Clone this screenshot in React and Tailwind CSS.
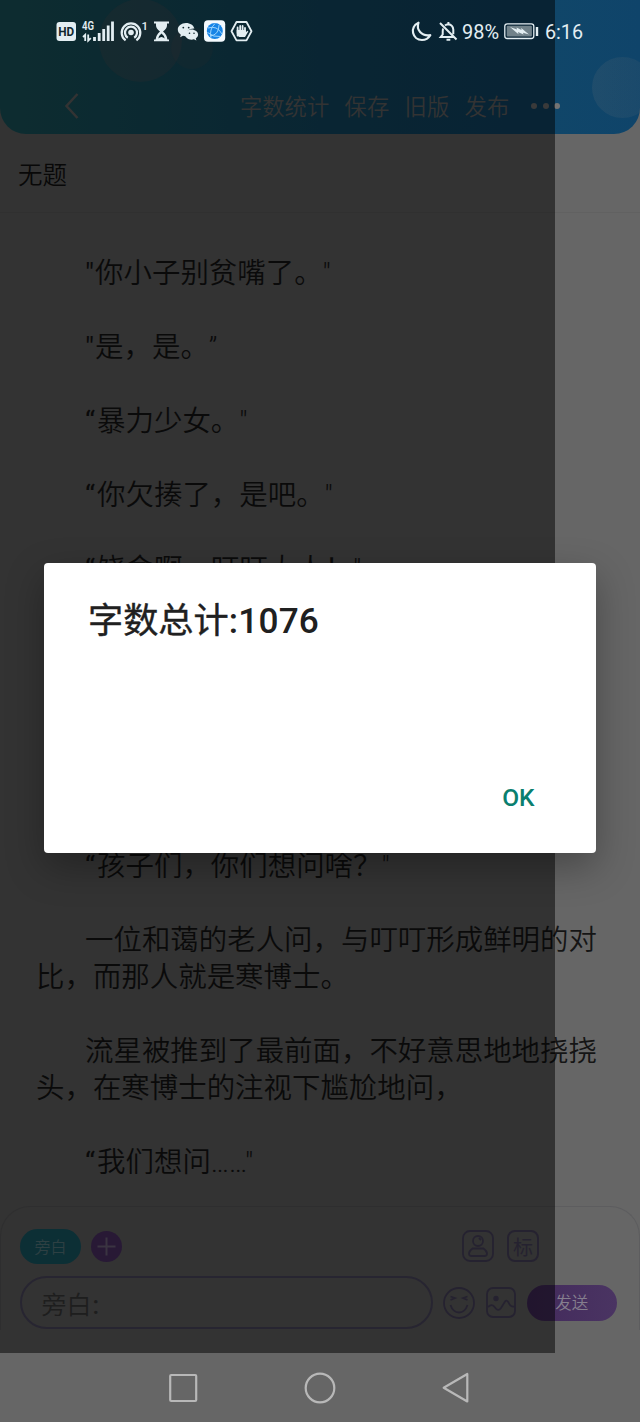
import React from "react";

const paragraphs = [
  '"你小子别贫嘴了。"',
  '"是，是。”',
  '“暴力少女。"',
  '“你欠揍了，是吧。"',
  '“饶命啊，叮叮大人！"',
  "",
  "",
  "",
  '“孩子们，你们想问啥？"',
  "一位和蔼的老人问，与叮叮形成鲜明的对比，而那人就是寒博士。",
  "流星被推到了最前面，不好意思地地挠挠头，在寒博士的注视下尴尬地问，",
  '“我们想问……"',
];

function StatusBar() {
  return (
    <div className="absolute inset-x-0 top-0 flex h-[62px] items-center text-[#e3eef2]">
      <svg width="640" height="62" viewBox="0 0 640 62" fill="none" stroke="currentColor">
        <rect x="56.5" y="22" width="19.5" height="19" rx="3" fill="currentColor" stroke="none" />
        <text x="58.300" y="36.300" fontSize="13" fontWeight="700" fontFamily="Roboto, sans-serif" fill="#10272e" stroke="none" textLength="16" lengthAdjust="spacingAndGlyphs">HD</text>
        <text x="82" y="30.300" fontSize="12" fontWeight="600" fontFamily="Roboto, sans-serif" fill="currentColor" stroke="none" textLength="12" lengthAdjust="spacingAndGlyphs">4G</text>
        <path d="M83 37l2.2-2.200v6.200M88.200 34.500v6.200l2.600-2.600" strokeWidth="1.8" />
        <path d="M94.500 37v4M99.200 33v8M103.700 29v12M108.200 25.500v15.500M112.500 21.500v19.500" strokeWidth="2.800" />
        <circle cx="131" cy="32.500" r="2.800" fill="currentColor" stroke="none" />
        <path d="M127.800 37.700a6 6 0 1 1 6.400 0M125.600 40.300a9.300 9.300 0 1 1 10.800 0" strokeWidth="2.200" />
        <text x="141.500" y="29.500" fontSize="11.500" fontWeight="500" fontFamily="Roboto, sans-serif" fill="currentColor" stroke="none">1</text>
        <path d="M154 22.500h15M154 40.300h15" strokeWidth="1.800" />
        <path d="M156 23h11v2.500q0 3-4 6q4 3 4.500 8.500h-12q.5-5.500 4.500-8.500q-4-3-4-6z" fill="currentColor" stroke="none" />
        <path d="M158.300 38.500q0-2.500 3.200-5q3.200 2.500 3.200 5q-3.200-3.200-6.400 0z" fill="#10272e" stroke="none" />
        <path d="M186 23c-4.600 0-8.200 3-8.200 6.600c0 2.100 1.200 3.900 3 5.100l-.7 2.500l2.900-1.400q1.500.5 3.400.4c-.9-5 3.400-7.900 8-7.600c-.8-3.400-4.200-5.600-8.400-5.600z" fill="currentColor" stroke="none" />
        <path d="M191.500 29.500c-3.600 0-6.500 2.300-6.500 5.100s2.900 5.100 6.500 5.100q1.300 0 2.400-.4l2.500 1.200l-.6-2c1.400-1 2.300-2.300 2.300-3.900c0-2.800-3-5.100-6.600-5.100z" fill="currentColor" stroke="none" />
        <g fill="#10272e" stroke="none">
          <circle cx="183.300" cy="27.600" r=".9" /><circle cx="188.700" cy="27.600" r=".9" />
          <circle cx="189.500" cy="33.300" r=".8" /><circle cx="194" cy="33.300" r=".8" />
        </g>
        <rect x="204" y="20.200" width="21.200" height="21.600" rx="4" fill="#f4fafe" stroke="none" />
        <circle cx="214.800" cy="31" r="8" fill="#1684e6" stroke="none" />
        <path d="M208 28q9-3 14 6M211 37.500q-2-8 4-14M210 36q9-1 9-11M207.500 32.500q6 5 13 4" stroke="#a9dcff" strokeWidth=".9" />
        <path d="M236.500 22h10l5 9.200l-5 9.200h-10l-5-9.200z" strokeWidth="1.800" strokeLinejoin="round" />
        <path d="M237.600 35.500v-8M240.200 33v-7M242.600 33v-7M245 34v-6" strokeWidth="1.800" strokeLinecap="round" />
        <path d="M236.700 30h9.200v2l1.900-1.300q.8.200.2 1.300l-3 5h-6q-2.300-2-2.300-4z" fill="currentColor" stroke="none" />
        <path d="M418.500 22.700c-9.500 4.300-6 17.300 3.500 17.300c3.500 0 6.500-1.800 8.300-4.800c-9 1.300-14.300-5.400-11.800-12.500z" strokeWidth="2.200" strokeLinejoin="round" />
        <path d="M443 28.500c-.3 1.500-.3 6-.3 6l-2 2.500h12.500M445 25.500q1.300-1.300 3.300-1.300q4.600.5 5 5.500v4.500M448.400 24v-2M446.500 39.800h3.800M440 23l16.500 16.500" strokeWidth="2" />
        <rect x="504.800" y="23.800" width="29" height="14.700" rx="2.500" strokeWidth="1.300" />
        <rect x="506.700" y="25.700" width="25.200" height="10.900" rx="1" fill="#71828a" stroke="none" />
        <path d="M510 27l7 2.500l-.5-2l5 2.500l-.3-2l7.800 6.500l-6-1.800l.5 1.800l-5.500-2.500l.5 2.200z" fill="currentColor" stroke="none" />
        <path d="M537 27v9" strokeWidth="2.400" />
        <text x="462" y="38.600" fontSize="20" fontFamily="Roboto, sans-serif" fill="currentColor" stroke="none" textLength="37" lengthAdjust="spacingAndGlyphs">98%</text>
        <text x="545" y="38.600" fontSize="20" fontFamily="Roboto, sans-serif" fill="currentColor" stroke="none" textLength="38" lengthAdjust="spacingAndGlyphs">6:16</text>
      </svg>
    </div>
  );
}

function Header() {
  return (
    <header className="relative h-[134px] shrink-0 overflow-hidden rounded-b-[26px] bg-linear-to-r from-[#1b5960] via-[#134b66] to-[#0f446a] pt-[78px]">
      <span className="absolute -top-px left-[99px] size-[83px] rounded-full bg-[#755]/20" />
      <span className="absolute top-[27px] left-[171px] size-[42px] rounded-full bg-[#755]/12" />
      <span className="absolute top-[57px] left-[592px] size-[61px] rounded-full bg-linear-to-r from-[#777]/15 to-[#777]/10" />
      <div className="relative flex h-14 items-center pl-[64px] text-[#666]">
        <svg width="16" height="28" viewBox="0 0 16 28" fill="none" stroke="currentColor" strokeWidth="2.500">
          <path d="M13.500 2L2.500 14L13.500 26" />
        </svg>
        <nav className="mt-[2px] ml-[160px] flex gap-[15.4px] text-[22.3px] leading-none font-[350] whitespace-nowrap">
          <span>字数统计</span>
          <span>保存</span>
          <span>旧版</span>
          <span>发布</span>
        </nav>
        <span className="ml-[22px] flex gap-[5.500px]">
          <i className="size-[6px] rounded-full bg-[#747474]" />
          <i className="size-[6px] rounded-full bg-[#747474]" />
          <i className="size-[6px] rounded-full bg-[#747474]" />
        </span>
      </div>
    </header>
  );
}

function Paragraph({ text }) {
  const quoted = /^["“]/.test(text);
  return (
    <p className="mb-[37.050px] min-h-[37.050px] w-[572px] indent-[49px] font-[350] break-all">
      {quoted && <span className={text[0] === "“" ? "font-normal tracking-[2px]" : "font-normal tracking-[1px]"}>{text[0]}</span>}
      {quoted ? text.slice(1) : text}
    </p>
  );
}

function Composer() {
  return (
    <footer className="relative h-[147px] shrink-0 pt-[22px]">
      <span className="absolute inset-x-0 top-0 h-[124px] rounded-t-[30px] border border-b-0 border-[#5d5d5f]" />
      <div className="relative flex h-[36px] items-center pl-[20px]">
        <span className="flex h-[35px] w-[61px] items-center justify-center rounded-full bg-[#195e6b] pt-[4px] text-[16px] leading-none font-[350] text-[#5c8086]">旁白</span>
        <span className="ml-[10px] flex size-[31px] items-center justify-center rounded-full bg-[#50336b]">
          <svg width="19" height="19" viewBox="0 0 19 19" stroke="#756982" strokeWidth="2"><path d="M9.500 .5v18M.5 9.500h18" /></svg>
        </span>
        <svg className="ml-[340px]" width="32" height="32" viewBox="0 0 32 32" fill="none" stroke="#4b4460" strokeWidth="1.800">
          <rect x="1" y="1" width="30" height="30" rx="7" />
          <circle cx="16" cy="11" r="5" />
          <path d="M17 8l2 2" />
          <path d="M10.500 18.500h11q3.500 2.500 3.500 5q0 2.500-2.500 2.500h-13Q7 26 7 23.500q0-2.500 3.500-5z" />
        </svg>
        <span className="ml-[13px] flex size-[32px] items-center justify-center rounded-[8px] border-2 border-[#4b4460] pt-[3px] text-[20px] leading-none text-[#4b4460]">标</span>
      </div>
      <div className="relative mt-[12px] flex h-[53px] items-center pl-[19.500px]">
        <span className="flex h-[53px] w-[413px] items-center rounded-full border-2 border-[#4f4a62] pt-[5px] pl-[20px] text-[25px] leading-none font-[350] text-[#3c3c3c]">旁白<span className="pl-[1px] font-medium">:</span></span>
        <svg className="ml-[10px]" width="32" height="32" viewBox="0 0 32 32" fill="none" stroke="#4b4460" strokeWidth="1.800">
          <circle cx="16" cy="16" r="15" />
          <path d="M7.500 18q2.500 7.500 8.500 7.500t8.500-7.500M7.500 9.500l4.500 1.500l-4.500 2M24.500 9.500l-4.500 1.500l4.500 2" />
        </svg>
        <svg className="ml-[11.500px]" width="30" height="31" viewBox="0 0 30 31" fill="none" stroke="#4b4460" strokeWidth="1.800">
          <rect x="1" y="1" width="28" height="29" rx="6" />
          <circle cx="10" cy="11.500" r="1.800" fill="#4b4460" />
          <path d="M2 20q4-4 7 .5t6 .5l4-6.500q2-2 3.500 1q2 4.500 5.500 4" />
        </svg>
        <span className="ml-[11px] flex h-[36px] w-[89.500px] items-center justify-center rounded-full bg-linear-to-r from-[#432a5c] to-[#4a3462] pt-[4px] text-[16.500px] leading-none font-[350] text-[#857e8e]">发送</span>
      </div>
    </footer>
  );
}

export default function App() {
  return (
    <div className="relative flex h-[1422px] w-[640px] flex-col overflow-hidden bg-[#666] font-['Roboto','Noto_Sans_CJK_SC',sans-serif] [text-spacing-trim:space-all]">
      <Header />
      <h1 className="flex h-[79px] shrink-0 items-center border-b border-[#616161] pt-[6px] pl-[18px] text-[24.500px] font-[350] text-[#111]">无题</h1>
      <main className="min-h-0 flex-1 overflow-hidden px-[36px] pt-[42px] text-[28.450px] leading-[37.050px] text-[#151515]">
        {paragraphs.map((text, i) => (
          <Paragraph key={i} text={text} />
        ))}
      </main>
      <Composer />
      <nav className="h-[69px] shrink-0 text-[#b8b8b8]">
        <svg width="640" height="69" viewBox="0 0 640 69" fill="none" stroke="currentColor" strokeWidth="2.200" strokeLinejoin="round">
          <rect x="170.200" y="22" width="26" height="26" rx="1" />
          <circle cx="320" cy="35" r="14.300" />
          <path d="M467.300 21v27.500L443.700 34.800z" />
        </svg>
      </nav>

      <div className="absolute top-0 left-0 h-[1353px] w-[555px] bg-black/50" />
      <StatusBar />

      <section role="dialog" className="absolute top-[563px] left-[44px] flex h-[290px] w-[551.500px] flex-col justify-between rounded-[4px] bg-white px-[44px] pt-[36px] pb-[39px] shadow-[0_14px_38px_rgba(0,0,0,0.3)]">
        <h2 className="text-[35.200px] leading-[44px] font-normal text-[#202020]"><span className="[-webkit-text-stroke:0.4px]">字数总计</span><span className="font-medium tracking-[0.2px]">:1076</span></h2>
        <button className="mr-[17px] self-end text-[24.500px] leading-[32px] font-medium text-[#0b7f6f]">OK</button>
      </section>
    </div>
  );
}
